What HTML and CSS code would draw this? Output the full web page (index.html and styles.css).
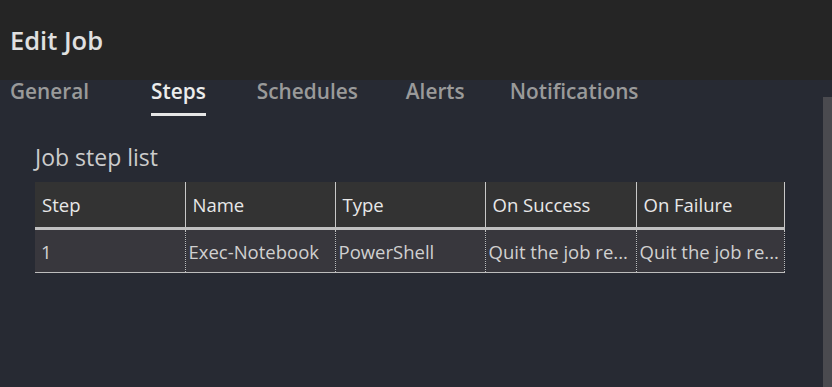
FILE: index.html
```html
<!DOCTYPE html>
<html lang="en">
<head>
  <meta charset="UTF-8" />
  <title>Edit Job</title>
  <link rel="stylesheet" href="styles.css">
</head>
<body>
  <header class="dialog-header">
    <h1>Edit Job</h1>
  </header>

  <main class="dialog-body">
    <nav class="tabs">
      <a class="tab">General</a>
      <a class="tab active">Steps</a>
      <a class="tab">Schedules</a>
      <a class="tab">Alerts</a>
      <a class="tab">Notifications</a>
    </nav>

    <section class="steps">
      <h2>Job step list</h2>
      <table class="step-table">
        <colgroup>
          <col class="col-step">
          <col class="col-name">
          <col class="col-type">
          <col class="col-success">
          <col class="col-failure">
        </colgroup>
        <thead>
          <tr>
            <th>Step</th>
            <th>Name</th>
            <th>Type</th>
            <th>On Success</th>
            <th>On Failure</th>
          </tr>
        </thead>
        <tbody>
          <tr>
            <td>1</td>
            <td>Exec-Notebook</td>
            <td>PowerShell</td>
            <td title="Quit the job reporting success">Quit the job re...</td>
            <td title="Quit the job reporting failure">Quit the job re...</td>
          </tr>
        </tbody>
      </table>
    </section>

    <div class="scrollbar"></div>
  </main>
</body>
</html>
```

FILE: styles.css
```css
body {
  margin: 0;
  height: 387px;
  overflow: hidden;
  font-family: 'Open Sans', 'Noto Sans', sans-serif;
  background: #272a33;
  color: #d4d4d4;
  display: flex;
  flex-direction: column;
}
.dialog-header {
  background: #252525;
  height: 80px;
  display: flex;
  align-items: center;
  padding: 0 10px;
}
.dialog-header h1 {
  margin: 0;
  font-size: 25.5px;
  font-weight: 600;
  color: #e0e0e0;
}
.dialog-body {
  flex: 1;
  position: relative;
}
.tabs {
  display: flex;
  padding: 0 10px;
  height: 36px;
}
.tab {
  font-size: 20.8px;
  font-weight: 600;
  color: #9a9a9a;
  line-height: 22px;
  box-sizing: border-box;
  height: 36px;
  border-bottom: 3px solid transparent;
  cursor: pointer;
}
.tab:nth-child(1) { margin-right: 62px; }
.tab:nth-child(2) { margin-right: 51px; }
.tab:nth-child(3) { margin-right: 48px; }
.tab:nth-child(4) { margin-right: 45px; }
.tab.active {
  color: #ececec;
  border-bottom-color: #e6e6e6;
}
.steps {
  padding: 27px 47px 0 35px;
}
.steps h2 {
  margin: 0 0 11px;
  font-size: 23px;
  font-weight: 400;
  color: #cccccc;
  line-height: 28px;
}
.step-table {
  width: 750px;
  border-collapse: collapse;
  table-layout: fixed;
  font-size: 18.5px;
}
.col-step,
.col-name,
.col-type { width: 150px; }
.col-success { width: 151px; }
.step-table th {
  background: #333333;
  text-align: left;
  font-weight: 400;
  color: #e8e8e8;
  height: 45px;
  padding: 0 7px;
  border-left: 1px solid #c8c8c8;
  border-bottom: 3px solid #c0c0c0;
}
.step-table th:first-child { border-left: none; }
.step-table th:last-child { border-right: 1px solid #c8c8c8; }
.step-table td {
  background: #38373d;
  color: #d0d0d0;
  height: 42px;
  padding: 0 2px 0 3px;
  white-space: nowrap;
  overflow: hidden;
  border-left: 1px dotted #bdbdbd;
  border-bottom: 1px solid #bdbdbd;
}
.step-table td:first-child {
  border-left: none;
  padding-left: 6px;
}
.step-table td:last-child { border-right: 1px dotted #bdbdbd; }
.scrollbar {
  position: absolute;
  right: 0;
  top: 17px;
  bottom: 0;
  width: 9px;
  background: #4a4a4f;
}
```
